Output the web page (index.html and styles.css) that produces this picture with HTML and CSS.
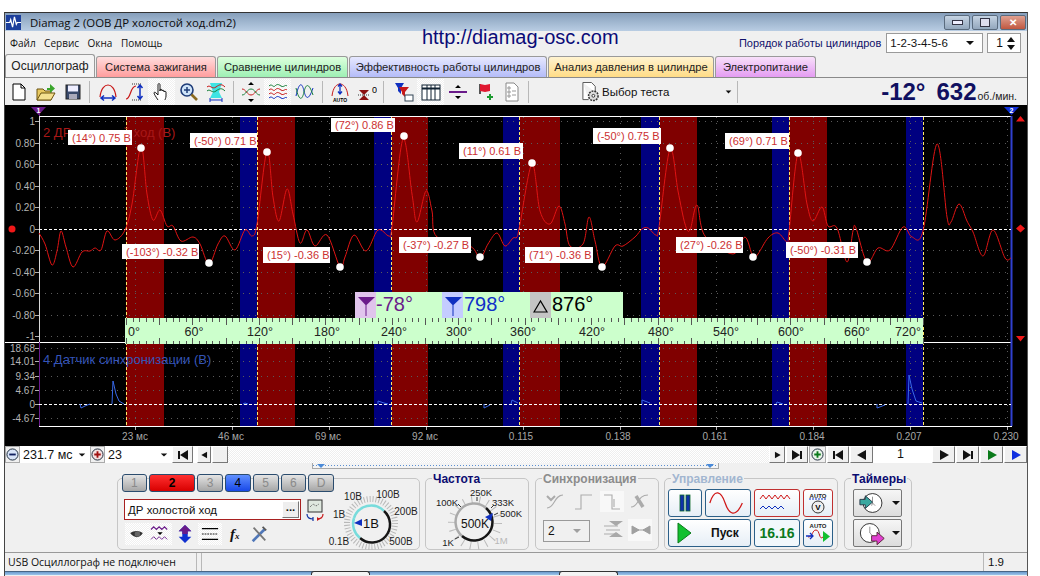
FILE: index.html
```html
<!DOCTYPE html>
<html lang="ru">
<head>
    <meta charset="UTF-8">
    <title>Diamag 2</title>
    <link rel="stylesheet" href="styles.css">
</head>
<body>
<svg class="defs" width="0" height="0">
    <symbol id="i-first" viewBox="0 0 14 12"><path d="M2 2h2v8H2zM12 1v10L4 6z"/></symbol>
    <symbol id="i-last" viewBox="0 0 14 12"><path d="M10 2h2v8h-2zM2 1v10l8-5z"/></symbol>
    <symbol id="i-next" viewBox="0 0 14 12"><path d="M3 1v10l9-5z"/></symbol>
    <symbol id="i-prev" viewBox="0 0 14 12"><path d="M11 1v10L2 6z"/></symbol>
    <symbol id="i-down" viewBox="0 0 10 6"><path d="M1 1h8L5 5z"/></symbol>
</svg>

<div class="window">
    <div class="titlebar">
        <svg class="app-icon" viewBox="0 0 16 16"><rect width="16" height="16" fill="#1c3f9c"/><path d="M0 8h4l1-3 2 8 2-11 2 8 1-2h4" fill="none" stroke="#fff" stroke-width="1.3"/></svg>
        <span class="title-text">Diamag 2 (ООВ ДР холостой ход.dm2)</span>
        <div class="win-btns">
            <span class="win-btn"><i class="win-min"></i></span>
            <span class="win-btn"><i class="win-max"></i></span>
            <span class="win-btn win-close">✕</span>
        </div>
    </div>

    <div class="menubar">
        <span class="menu-item">Файл</span>
        <span class="menu-item">Сервис</span>
        <span class="menu-item">Окна</span>
        <span class="menu-item">Помощь</span>
        <span class="site-link">http://diamag-osc.com</span>
        <span class="order-label">Порядок работы цилиндров</span>
        <span class="combo order-combo">1-2-3-4-5-6<svg class="arrow"><use href="#i-down"/></svg></span>
        <span class="combo spin-combo">1<span class="spin"><b></b><b></b></span></span>
    </div>

    <div class="tabs">
        <span class="tab tab-active">Осциллограф</span>
        <span class="tab tab-red">Система зажигания</span>
        <span class="tab tab-green">Сравнение цилиндров</span>
        <span class="tab tab-violet">Эффективность работы цилиндров</span>
        <span class="tab tab-yellow">Анализ давления в цилиндре</span>
        <span class="tab tab-pink">Электропитание</span>
    </div>

    <div class="toolbar">
        <span class="tool"><svg viewBox="0 0 20 20"><path d="M4 2h8l4 4v12H4z" fill="#fff" stroke="#000"/><path d="M12 2v4h4" fill="none" stroke="#000"/></svg></span>
        <span class="tool"><svg viewBox="0 0 20 20"><path d="M1 18V7h6l2 2h6v9z" fill="#e8c860" stroke="#6b5310"/><path d="M1 18l4-7h14l-4 7z" fill="#f5e090" stroke="#6b5310"/><path d="M11 6h3V2l5 4.500-5 4.500V8h-3z" fill="#3aa52c"/></svg></span>
        <span class="tool"><svg viewBox="0 0 20 20"><rect x="3" y="3" width="14" height="14" fill="#39496a" stroke="#222"/><rect x="5" y="3.500" width="10" height="6" fill="#eef"/><rect x="6" y="12" width="8" height="5" fill="#aab"/></svg></span>
        <i class="tool-sep sep-a"></i>
        <span class="tool"><svg viewBox="0 0 20 20"><path d="M2 15C3 6 7 3 10 3s7 3 8 12" fill="none" stroke="#c81818" stroke-width="1.2"/><path d="M3 16h14M6 13.500 3 16l3 2.500M14 13.500l3 2.500-3 2.500" fill="none" stroke="#1030c0" stroke-width="1.500"/></svg></span>
        <span class="tool"><svg viewBox="0 0 20 20"><path d="M1 17c5 0 4-13 10-13" fill="none" stroke="#c81818" stroke-width="1.2"/><path d="M7 2h10M7 18h10" stroke="#333" stroke-dasharray="1 1"/><path d="M15 3v14M12.500 6 15 3l2.500 3M12.500 14l2.500 3 2.500-3" fill="none" stroke="#1030c0" stroke-width="1.500"/></svg></span>
        <span class="tool tool-on"><svg viewBox="0 0 20 20"><path d="M6 18c-2-3-4-6-4-7s1-1 2 0l2 2V3c0-2 2-2 2 0v6-1c0-1 2-1 2 0v1c0-1 2-1 2 0v1c0-1 2-1 2 0v4c0 2-1 3-1 4" fill="#fff" stroke="#000" stroke-width=".9"/></svg></span>
        <span class="tool"><svg viewBox="0 0 20 20"><circle cx="8" cy="8" r="6" fill="#cfe4f8" stroke="#1e3c78" stroke-width="1.600"/><path d="M5 8h6M8 5v6" stroke="#1e3c78" stroke-width="1.500"/><path d="M12.500 12.500 18 18" stroke="#8a6a20" stroke-width="2.600"/></svg></span>
        <span class="tool"><svg viewBox="0 0 20 20"><path d="M4 1h12l-3 9 3 6H4l3-6z" fill="#3fe4e4"/><path d="M1 5c3-3 5 3 9 0s6-3 9 0" fill="none" stroke="#c81818"/><path d="M1 9c3-3 5 3 9 0s6-3 9 0" fill="none" stroke="#18803a"/><path d="M4 18h12M4 16v4M16 16v4" stroke="#1030c0" fill="none"/></svg></span>
        <i class="tool-sep sep-b"></i>
        <span class="tool"><svg viewBox="0 0 20 20"><path d="M1 7c4 0 5 6 9 6s5-6 9-6" fill="none" stroke="#c81818"/><path d="M1 13c4 0 5-6 9-6s5 6 9 6" fill="none" stroke="#18803a"/><path d="M7 3h6l-3-3zM7 17h6l-3 3z"/></svg></span>
        <span class="tool tool-on"><svg viewBox="0 0 20 20"><path d="M1 4c3-3 4 2 6 0s3-2 6 0 4-2 6 0" fill="none" stroke="#18803a"/><path d="M1 8c3-3 4 2 6 0s3-2 6 0 4-2 6 0M1 12c3-3 4 2 6 0s3-2 6 0 4-2 6 0" fill="none" stroke="#c81818"/><path d="M1 16c3-3 4 2 6 0s3-2 6 0 4-2 6 0" fill="none" stroke="#1030c0"/></svg></span>
        <span class="tool"><svg viewBox="0 0 20 20"><path d="M1 14C4 0 7 0 9 9s5 9 9-3" fill="none" stroke="#1030c0"/><path d="M1 6c3 13 6 13 8 4s5-9 9 3" fill="none" stroke="#18803a"/></svg></span>
        <i class="tool-sep sep-c"></i>
        <span class="tool"><svg viewBox="0 0 20 20"><path d="M2 14C3 5 7 2 10 2s7 3 8 12" fill="none" stroke="#c81818"/><path d="M10 2v10M8 4.500 10 2l2 2.500M8 9.500l2 2.500 2-2.500" fill="none" stroke="#1030c0" stroke-width="1.300"/><text x="10" y="19.500" class="tiny-auto">AUTO</text></svg></span>
        <span class="tool"><svg viewBox="0 0 20 20"><path d="M2 8h10l-5 5zM2 18h10l-5-5z" fill="#8a1010"/><path d="M1 13h12" stroke="#333" stroke-dasharray="1 1"/><text x="15" y="11" class="tiny-zero">0</text></svg></span>
        <i class="tool-sep sep-d"></i>
        <span class="tool"><svg viewBox="0 0 20 20"><path d="M1 1h9L7 6v6L4 9V6z" fill="#1030c0"/><path d="M5 5h10l-4 5v5l-3-3v-2z" fill="#c81818"/><rect x="11" y="13" width="8" height="6" fill="#fff" stroke="#345"/></svg></span>
        <span class="tool tool-on"><svg viewBox="0 0 20 20"><rect x="1" y="3" width="18" height="15" fill="#fff" stroke="#123"/><path d="M1 6.500h18" stroke="#123" stroke-width="2"/><path d="M6 3v15M10 3v15M14 3v15" stroke="#123"/></svg></span>
        <span class="tool"><svg viewBox="0 0 20 20"><path d="M1 10h18" stroke="#6a1b8a" stroke-width="2"/><path d="M7 6h6l-3-3zM7 14h6l-3 3z"/></svg></span>
        <span class="tool"><svg viewBox="0 0 20 20"><path d="M5 2v10" stroke="#222" stroke-width="1.500"/><path d="M5 2l5 1 5-1v7l-5 1-5-1z" fill="#e01830"/><path d="M12 15h6M15 12v6" stroke="#1c9a30" stroke-width="2"/></svg></span>
        <span class="tool"><svg viewBox="0 0 20 20"><path d="M4 1h8l4 4v14H4z" fill="#fff" stroke="#888"/><path d="M6 5h2v2H6zM6 9h2v2H6zM6 13h2v2H6zM10 9h4M10 13h4" stroke="#999" fill="none"/></svg></span>
        <i class="tool-sep sep-e"></i>
        <span class="test-select">
            <svg class="test-icon" viewBox="0 0 20 22"><path d="M2 1h9l4 4v6M2 1v18h6" fill="#fff" stroke="#555"/><circle cx="13" cy="15" r="5" fill="#ddd" stroke="#333" stroke-dasharray="2 1" stroke-width="1.600"/><circle cx="13" cy="15" r="1.500" fill="#fff" stroke="#333"/></svg>
            <span class="test-text">Выбор теста</span>
            <svg class="arrow test-arrow"><use href="#i-down"/></svg>
        </span>
        <i class="tool-sep"></i>
        <span class="rpm"><b class="rpm-angle">-12°</b><b class="rpm-val">632</b><span class="rpm-unit">об./мин.</span></span>
    </div>

    <svg class="scope" id="scope" width="1022" height="341" viewBox="5 106 1022 341">
        <rect x="5" y="106" width="1022" height="341" fill="#000"/>
        <g id="back"></g>

        <text x="43" y="138" class="ch-title ch-red">2 ДР холостой ход (В)</text>
        <text x="43" y="365" class="ch-title ch-blue">4 Датчик синхронизации (В)</text>

        <g id="trace"></g>

        <g class="axis-y">
            <text x="35" y="126">1</text><text x="35" y="148">0.80</text><text x="35" y="169">0.60</text>
            <text x="35" y="191">0.40</text><text x="35" y="212">0.20</text><text x="35" y="234">0</text>
            <text x="35" y="255">-0.20</text><text x="35" y="277">-0.40</text><text x="35" y="298">-0.60</text>
            <text x="35" y="320">-0.80</text><text x="35" y="341">-1</text>
            <text x="35" y="353">18.68</text><text x="35" y="366">14.01</text><text x="35" y="381">9.34</text>
            <text x="35" y="395">4.67</text><text x="35" y="409">0</text><text x="35" y="423">-4.67</text>
        </g>
        <g class="axis-t">
            <text x="135" y="441">23 мс</text><text x="231" y="441">46 мс</text><text x="328" y="441">69 мс</text>
            <text x="425" y="441">92 мс</text><text x="521" y="441">0.115</text><text x="618" y="441">0.138</text>
            <text x="715" y="441">0.161</text><text x="812" y="441">0.184</text><text x="909" y="441">0.207</text>
            <text x="1006" y="441">0.230</text>
        </g>

        <rect x="125" y="319" width="798" height="26" fill="#ccffcc"/>
        <g id="ruler"></g>
        <g class="ruler-num">
            <text x="134" y="337">0°</text><text x="194" y="337">60°</text><text x="260" y="337">120°</text>
            <text x="327" y="337">180°</text><text x="394" y="337">240°</text><text x="459" y="337">300°</text>
            <text x="523" y="337">360°</text><text x="592" y="337">420°</text><text x="661" y="337">480°</text>
            <text x="726" y="337">540°</text><text x="791" y="337">600°</text><text x="857" y="337">660°</text>
            <text x="908" y="337">720°</text>
        </g>

        <rect x="355" y="293" width="268" height="26" fill="#ccffcc"/>
        <rect x="355" y="293" width="21" height="26" fill="#e0c4ec"/>
        <rect x="442" y="293" width="21" height="26" fill="#c4ccff"/>
        <rect x="530" y="293" width="21" height="26" fill="#c4c4c4"/>
        <path d="M358 298h17l-8.500 8v11h-1v-11z" fill="#6a1b8a"/>
        <path d="M445 298h17l-8.500 8v11h-1v-11z" fill="#1030c0"/>
        <path d="M534 313l6.500-11 6.500 11z" fill="none" stroke="#000" stroke-width="1.200"/>
        <text x="376" y="312" class="readout read-a">-78°</text>
        <text x="464" y="312" class="readout read-b">798°</text>
        <text x="552" y="312" class="readout">876°</text>

        <g class="tip">
            <rect x="68" y="131" width="64" height="15"/><text x="72" y="143">(14°) 0.75 В</text>
            <rect x="190" y="134" width="67" height="15"/><text x="194" y="146">(-50°) 0.71 В</text>
            <rect x="122" y="245" width="77" height="15"/><text x="126" y="257">(-103°) -0.32 В</text>
            <rect x="263" y="248" width="67" height="16"/><text x="267" y="260">(15°) -0.36 В</text>
            <rect x="331" y="119" width="64" height="14"/><text x="335" y="130">(72°) 0.86 В</text>
            <rect x="459" y="144" width="64" height="16"/><text x="463" y="156">(11°) 0.61 В</text>
            <rect x="399" y="238" width="72" height="16"/><text x="403" y="250">(-37°) -0.27 В</text>
            <rect x="525" y="248" width="68" height="16"/><text x="529" y="260">(71°) -0.36 В</text>
            <rect x="593" y="129" width="68" height="16"/><text x="597" y="141">(-50°) 0.75 В</text>
            <rect x="676" y="238" width="67" height="16"/><text x="680" y="250">(27°) -0.26 В</text>
            <rect x="725" y="134" width="64" height="16"/><text x="729" y="146">(69°) 0.71 В</text>
            <rect x="786" y="243" width="72" height="16"/><text x="790" y="255">(-50°) -0.31 В</text>
        </g>
        <g fill="#fff">
            <circle cx="141" cy="149" r="3.800"/><circle cx="267" cy="153" r="3.800"/><circle cx="209" cy="264" r="3.800"/>
            <circle cx="340" cy="268" r="3.800"/><circle cx="404" cy="137" r="3.800"/><circle cx="532" cy="164" r="3.800"/>
            <circle cx="480" cy="258" r="3.800"/><circle cx="602" cy="268" r="3.800"/><circle cx="670" cy="149" r="3.800"/>
            <circle cx="753" cy="258" r="3.800"/><circle cx="798" cy="154" r="3.800"/><circle cx="867" cy="263" r="3.800"/>
        </g>

        <circle cx="12" cy="230" r="3.500" fill="#f01818"/>
        <path d="M31 108h15l-7.500 8z" fill="#6a1b8a"/>
        <text x="38.500" y="114" class="cursor-num">1</text>
        <path d="M1004 108h15l-7.500 8z" fill="#1030d8"/>
        <text x="1011.500" y="114" class="cursor-num">2</text>
        <path d="M1016 122.500l4.500-5.500 4.500 5.500zM1016 337l4.500 5.500 4.500-5.500zM1016 229.500l4.500-4 4.500 4-4.500 4z" fill="#f01818"/>
    </svg>

    <div class="navbar">
        <span class="round-btn"><svg viewBox="0 0 14 14"><circle cx="7" cy="7" r="6" fill="#d8e4f8" stroke="#123"/><path d="M3.500 7h7" stroke="#102060" stroke-width="2"/></svg></span>
        <span class="nav-combo nav-combo-a">231.7 мс<svg class="arrow"><use href="#i-down"/></svg></span>
        <span class="round-btn"><svg viewBox="0 0 14 14"><circle cx="7" cy="7" r="6" fill="#f4e0e0" stroke="#123"/><path d="M3.500 7h7M7 3.500v7" stroke="#a01010" stroke-width="2"/></svg></span>
        <span class="nav-combo nav-combo-b">23<svg class="arrow"><use href="#i-down"/></svg></span>
        <span class="nav-btn btn-w21"><svg><use href="#i-first"/></svg></span>
        <span class="nav-btn btn-w14"><svg class="small"><use href="#i-prev"/></svg></span>
        <span class="nav-btn btn-w16"></span>
        <span class="nav-fill"></span>
        <span class="nav-btn btn-w16"><svg class="small"><use href="#i-next"/></svg></span>
        <span class="nav-btn btn-w22 ml1"><svg><use href="#i-last"/></svg></span>
        <span class="round-btn round-green ml1"><svg viewBox="0 0 14 14"><circle cx="7" cy="7" r="6" fill="#e8f4e8" stroke="#123"/><path d="M3.500 7h7M7 3.500v7" stroke="#0a7a1a" stroke-width="2"/></svg></span>
        <span class="nav-btn btn-w22 ml1"><svg><use href="#i-first"/></svg></span>
        <span class="nav-btn btn-w23 ml1"><svg><use href="#i-prev"/></svg></span>
        <span class="nav-page">1</span>
        <span class="nav-btn btn-w23"><svg><use href="#i-next"/></svg></span>
        <span class="nav-btn btn-w23 ml1"><svg><use href="#i-last"/></svg></span>
        <span class="nav-btn btn-w23 ml1 c-green"><svg><use href="#i-next"/></svg></span>
        <span class="nav-btn btn-w23 ml1 c-blue"><svg><use href="#i-next"/></svg></span>
    </div>

    <div class="panel">
        <div class="splitter"><i class="split-l"></i><i class="split-r"></i></div>
        <div class="groups">
            <div class="group group-channels">
                <div class="ch-col">
                    <div class="ch-btns">
                        <span class="ch-btn">1</span>
                        <span class="ch-btn ch-on-red">2</span>
                        <span class="ch-btn">3</span>
                        <span class="ch-btn ch-on-blue">4</span>
                        <span class="ch-btn">5</span>
                        <span class="ch-btn">6</span>
                        <span class="ch-btn">D</span>
                    </div>
                    <div class="ch-row">
                        <div class="ch-input">ДР холостой ход<span class="dots">...</span></div>
                        <svg class="ch-swap" viewBox="0 0 20 22"><rect x="3" y="1" width="14" height="12" fill="#dfe8df" stroke="#333"/><path d="M5 8l3-3 3 2 3-2" fill="none" stroke="#555" stroke-dasharray="1 1"/><path d="M2 15c0 4 3 5 6 5M8 18v4" fill="none" stroke="#1030a0" stroke-width="1.200"/><path d="M18 15c0 4-3 5-6 5" fill="none" stroke="#c81818" stroke-width="1.200"/><path d="M15 20l-3-2v4z" fill="#c81818"/></svg>
                    </div>
                    <div class="ch-tools">
                        <span class="ch-tool tool-on w23"><svg viewBox="0 0 20 20"><path d="M3 9c4-3 10-3 14 0-3 6-10 6-14 0z" fill="#333"/><circle cx="11" cy="10" r="3" fill="#666"/></svg></span>
                        <span class="ch-tool tool-on w24"><svg viewBox="0 0 22 20"><path d="M1 5l3-3 3 3 3-3 3 3 3-3 3 3" fill="none" stroke="#6a1b8a" stroke-width="1.300"/><path d="M8 8h6l-3 3z" fill="#000"/><path d="M1 16l3-3 3 3 3-3 3 3 3-3 3 3" fill="none" stroke="#6a1b8a"/></svg></span>
                        <span class="ch-tool w18"><svg viewBox="0 0 18 20"><path d="M9 0l7 7h-4v6h4l-7 7-7-7h4V7H2z" fill="#1030d0"/><path d="M9 0l7 7h-4v3H6V7H2z" fill="#6a1b8a"/></svg></span>
                        <span class="ch-tool tool-on w24 gap5"><svg viewBox="0 0 22 20"><path d="M2 4h18M2 16h18" stroke="#000" stroke-width="1.400"/><path d="M2 10h18" stroke="#000" stroke-dasharray="2 1"/></svg></span>
                        <span class="ch-fx">f<small>x</small></span>
                        <span class="ch-tool w18 gap6"><svg viewBox="0 0 18 20"><path d="M2 18 15 5" stroke="#5077b8" stroke-width="3"/><path d="M3 3l13 14" stroke="#777" stroke-width="2"/><path d="M13 2l4 4" stroke="#555" stroke-width="2"/></svg></span>
                    </div>
                </div>
                <svg class="knob-a" width="86" height="71" viewBox="334 480 86 71">
                    <circle cx="371" cy="524" r="24" class="knob-ticks"/>
                    <path d="M354 519a18 18 0 0 1 30-7" class="knob-cyan"/>
                    <path d="M384 512a18 18 0 0 1-24 27" class="knob-dark"/>
                    <path d="M360 539a18 18 0 0 1-6-20" class="knob-cyan"/>
                    <path d="M354 524l8-4v7z" fill="#1030c0"/>
                    <text x="371" y="529" class="knob-mid">1В</text>
                    <g class="knob-lab">
                        <text x="353" y="501">10В</text><text x="388" y="499">100В</text>
                        <text x="339" y="519">1В</text><text x="406" y="516">200В</text>
                        <text x="339" y="546">0.1В</text><text x="401" y="546">500В</text>
                    </g>
                </svg>
            </div>

            <div class="group group-freq">
                <span class="group-title">Частота</span>
                <svg class="knob-b" width="102" height="71" viewBox="426 480 102 71">
                    <circle cx="475" cy="524" r="23" class="knob-ticks wide"/>
                    <path d="M462 537a18 18 0 0 1 24-28" class="knob-gray"/>
                    <path d="M486 509a18 18 0 0 1-24 28" class="knob-dark"/>
                    <path d="M485 518l8-4-2 8z" fill="#1030c0"/>
                    <text x="475" y="529" class="knob-mid big">500K</text>
                    <g class="knob-lab lab-small">
                        <text x="447" y="507">100K</text><text x="481" y="497">250K</text>
                        <text x="503" y="507">333K</text><text x="511" y="518">500K</text>
                        <text x="448" y="547">1K</text><text x="501" y="545" class="off">1M</text>
                    </g>
                    <path d="M461 508l-3-3M477 502v-4M491 509l3-3M494 516l4-2M459 538l-4 2" stroke="#333"/>
                </svg>
            </div>

            <div class="group group-sync">
                <span class="group-title t-gray">Синхронизация</span>
                <svg class="sync-art" width="122" height="71" viewBox="536 480 122 71">
                    <rect x="600" y="492" width="24" height="21" class="dither"/>
                    <rect x="628" y="520" width="24" height="22" class="dither"/>
                    <g fill="none" stroke="#ababab" stroke-width="1.100">
                        <path d="M547 509c8 0 7-13 16-13"/><path d="M547 497l4 4 4-4" stroke-width="2"/>
                        <path d="M575 510h6v-14h11M581 500v7"/>
                        <path d="M604 496h8v14h8M614 500v8"/>
                        <path d="M631 508c8 0 6-12 17-12"/><path d="M636 497l7 11" stroke-width="3.500"/>
                        <path d="M604 527h14M606 531h14M604 535h14"/>
                    </g>
                    <path d="M609 522h14l-7 5zM609 538h14l-7-5z" fill="#a8a8a8"/>
                    <path d="M632 531h18M632 527l7 4-7 4zM650 527l-7 4 7 4z" fill="#a0a0a0" stroke="#a0a0a0"/>
                </svg>
                <span class="combo sync-combo">2<svg class="arrow"><use href="#i-down"/></svg></span>
            </div>

            <div class="group group-ctrl">
                <span class="group-title t-pale">Управление</span>
                <div class="ctrl-grid">
                    <span class="cbtn"><svg viewBox="0 0 14 18" width="14" height="18"><rect x="2" y="1" width="4" height="16" fill="#1030a8" stroke="#0a6a2a" stroke-width=".8"/><rect x="8" y="1" width="4" height="16" fill="#1030a8" stroke="#0a6a2a" stroke-width=".8"/></svg></span>
                    <span class="cbtn"><svg viewBox="0 0 46 22" width="44" height="22"><path d="M4 11c5-16 12-12 16 0s11 16 18 0" fill="none" stroke="#d01818" stroke-width="1.300"/></svg></span>
                    <span class="cbtn cbtn-red"><svg viewBox="0 0 36 20" width="36" height="20"><path d="M1 6l3-4 3 4 3-4 3 4 3-4 3 4 3-4 3 4 3-4 3 4" fill="none" stroke="#d01818"/><path d="M1 16l3-3 3 3 3-3 3 3 3-3 3 3 3-3 3 3" fill="none" stroke="#1030c0"/></svg></span>
                    <span class="cbtn cbtn-red"><svg viewBox="0 0 24 24" width="24" height="24"><text x="12" y="6.500" class="auto-txt">AUTO</text><path d="M3 8h18" stroke="#1030c0" stroke-dasharray="2 1"/><circle cx="12" cy="16" r="6" fill="#eee" stroke="#333"/><text x="12" y="19" class="auto-v">V</text></svg></span>
                    <span class="cbtn"><svg viewBox="0 0 20 24" width="20" height="24"><path d="M3 2v20l13-10z" fill="#12c030" stroke="#0a7a1a"/></svg><b class="start-text">Пуск</b></span>
                    <span class="cbtn cbtn-time">16.16</span>
                    <span class="cbtn"><svg viewBox="0 0 26 24" width="26" height="24"><text x="13" y="6.500" class="auto-txt">AUTO</text><path d="M3 16c5 0 4-7 8-7s3 11 7 7" fill="none" stroke="#c81818"/><path d="M1 15h7M5 12l3 3-3 3" fill="none" stroke="#1030c0" stroke-width="1.300"/><path d="M18 10v11l7-5.500z" fill="#12c030"/></svg></span>
                </div>
            </div>

            <div class="group group-timers">
                <span class="group-title">Таймеры</span>
                <span class="timer-btn"><svg viewBox="0 0 30 26" width="30" height="26"><circle cx="15" cy="13" r="10.500" fill="#fff" stroke="#222"/><path d="M15 6v7l3 3M15 13l-1 3" stroke="#888" fill="none"/><path d="M1 9h6V5l8 7-8 7v-4H1z" fill="#3aa8a0" stroke="#234"/></svg><svg class="arrow"><use href="#i-down"/></svg></span>
                <span class="timer-btn"><svg viewBox="0 0 30 26" width="30" height="26"><circle cx="12" cy="13" r="10.500" fill="#fff" stroke="#222"/><path d="M12 6v7l3 3" stroke="#888" fill="none"/><path d="M14 16h6v-4l8 7-8 7v-4h-6z" fill="#e040d0" stroke="#523"/></svg><svg class="arrow"><use href="#i-down"/></svg></span>
            </div>
        </div>
    </div>

    <div class="statusbar">
        <span class="st-cell st-main">USB Осциллограф не подключен</span>
        <span class="st-cell st-fill"></span>
        <span class="st-cell st-ver">1.9</span>
    </div>
    <div class="taskbar"><i class="task-a"></i><i class="task-b"></i></div>
</div>
<script src="script.js"></script>
</body>
</html>
```

FILE: styles.css
```css
*{
    box-sizing: border-box;
    padding: 0;
    margin: 0;
}
body{
    background: #fff;
    font-family: "Liberation Sans", sans-serif;
    font-size: 11px;
    color: #111;
    overflow: hidden;
}
.defs{
    position: absolute;
}
.window{
    width: 1024px;
    height: 564px;
    margin: 12px 0 0 4px;
    border-left: 1px solid #444;
    border-right: 1px solid #555;
    border-top: 1px solid #333;
    background: #f0f0f0;
    display: flex;
    flex-direction: column;
    overflow: hidden;
}
.arrow{
    width: 10px;
    height: 6px;
    flex: none;
    fill: #111;
}

/* title and menu */
.titlebar{
    height: 18px;
    background: linear-gradient(#869fbb, #b9cde3);
    display: flex;
    align-items: center;
    padding-left: 1px;
}
.app-icon{
    width: 15px;
    height: 15px;
}
.title-text{
    margin-left: 9px;
    font-family: "Open Sans", sans-serif;
    font-size: 11.4px;
    color: #0c0c0c;
}
.win-btns{
    margin-left: auto;
    display: flex;
    gap: 2px;
    padding-right: 1px;
}
.win-btn{
    width: 26px;
    height: 15px;
    border: 1px solid #5a6b7e;
    border-radius: 2px;
    background: linear-gradient(#c5d3e2, #93a7bd);
    display: flex;
    align-items: center;
    justify-content: center;
    font-size: 10px;
    color: #fff;
}
.win-close{
    background: linear-gradient(#e0a090, #c05840);
    font-weight: bold;
}
.win-min{
    width: 11px;
    height: 5px;
    border: 1px solid #334;
    background: #eef;
}
.win-max{
    width: 10px;
    height: 9px;
    border: 1px solid #334;
    background: #dde;
}
.menubar{
    height: 23px;
    flex: none;
    display: flex;
    align-items: center;
    padding-left: 5px;
    background: #f0f0f0;
    font-family: "Open Sans", sans-serif;
    font-size: 10px;
}
.menu-item{
    margin-right: 8.500px;
}
.site-link{
    margin: -10px 0 0 251px;
    width: 317px;
    font-family: "Liberation Sans", sans-serif;
    font-size: 20px;
    color: #0b0b78;
}
.order-label{
    font-family: "Liberation Sans", sans-serif;
    font-size: 11px;
    color: #10106a;
    white-space: nowrap;
}
.combo{
    display: flex;
    align-items: center;
    background: #fff;
    border: 1px solid #9a9a9a;
    font-family: "Liberation Sans", sans-serif;
    font-size: 11.5px;
}
.order-combo{
    position: relative;
    width: 97px;
    height: 20px;
    margin-left: 5px;
    padding-left: 3px;
    justify-content: space-between;
    padding-right: 7px;
    margin-top: 1px;
}
.spin-combo{
    width: 34px;
    height: 20px;
    margin-left: 4px;
    padding-left: 8px;
    justify-content: space-between;
    margin-top: 1px;
    font-size: 12px;
}
.spin{
    display: flex;
    flex-direction: column;
    gap: 3px;
    padding-right: 5px;
}
.spin b{
    width: 0;
    height: 0;
    border-left: 4px solid transparent;
    border-right: 4px solid transparent;
    border-bottom: 5px solid #111;
}
.spin b + b{
    border-bottom: 0;
    border-top: 5px solid #111;
}

/* tabs */
.tabs{
    height: 23px;
    flex: none;
    display: flex;
    align-items: flex-end;
    gap: 1px;
    background: #f0f0f0;
}
.tab{
    height: 21px;
    border: 1px solid #9a9a9a;
    border-bottom: 0;
    border-radius: 3px 3px 0 0;
    display: flex;
    align-items: center;
    justify-content: center;
    font-size: 11.2px;
    color: #222;
    white-space: nowrap;
}
.tab-active{
    width: 90px;
    height: 23px;
    background: #f4f4f4;
    font-size: 12px;
}
.tab-red{
    width: 120px;
    background: linear-gradient(#fdd, #ff9d9d);
}
.tab-green{
    width: 131px;
    background: linear-gradient(#dfd, #9ef0b4);
}
.tab-violet{
    width: 198px;
    background: linear-gradient(#e6e8ff, #b4bcf8);
}
.tab-yellow{
    width: 166px;
    background: linear-gradient(#fff3d0, #ffdc86);
}
.tab-pink{
    width: 101px;
    background: linear-gradient(#f8e0fa, #e49cf2);
}

/* toolbar */
.toolbar{
    height: 28px;
    flex: none;
    display: flex;
    align-items: center;
    background: #f0f0f0;
    border-top: 1px solid #8a8a8a;
}
.tool{
    width: 27px;
    height: 26px;
    flex: none;
    display: flex;
    align-items: center;
    justify-content: center;
}
.tool svg{
    width: 20px;
    height: 20px;
}
.tool-on{
    background: #fafafa;
    background-image: repeating-conic-gradient(#f0f0f0 0 25%, #fff 0 50%);
    background-size: 2px 2px;
}
.tool-sep{
    width: 1px;
    height: 22px;
    flex: none;
    background: #b8b8b8;
}
.sep-a{
    margin: 0 4px 0 3px;
}
.sep-b{
    margin: 0 3px 0 4px;
}
.sep-c{
    margin: 0 3px 0 4px;
}
.sep-d{
    margin: 0 6px 0 3px;
}
.sep-e{
    margin-left: 3px;
}
.tiny-auto{
    font-size: 5px;
    font-weight: bold;
    text-anchor: middle;
}
.tiny-zero{
    font-size: 9px;
}
.test-select{
    width: 208px;
    display: flex;
    align-items: center;
    padding-left: 52px;
}
.test-icon{
    width: 19px;
    height: 22px;
}
.test-text{
    margin-left: 2px;
    font-size: 11.5px;
}
.test-arrow{
    margin-left: auto;
    margin-right: 5px;
    width: 7px;
}
.rpm{
    margin-left: auto;
    padding-right: 10px;
    display: flex;
    align-items: baseline;
    color: #101060;
}
.rpm b{
    font-size: 24px;
    line-height: 26px;
}
.rpm-val{
    margin-left: 11px;
}
.rpm-unit{
    margin-left: 1px;
    font-size: 10.500px;
    color: #222;
}

/* oscilloscope */
.scope{
    display: block;
    flex: none;
}
.ch-title{
    font-size: 13px;
}
.ch-red{
    fill: #a81818;
}
.ch-blue{
    fill: #3454b8;
}
.axis-y text{
    font-size: 10px;
    fill: #b4b4b4;
    text-anchor: end;
}
.axis-t text{
    font-size: 10px;
    fill: #a8a8a8;
    text-anchor: middle;
}
.ruler-num text{
    font-size: 12.500px;
    fill: #222;
    text-anchor: middle;
}
.readout{
    font-size: 20px;
    fill: #000;
}
.read-a{
    fill: #6a1b8a;
}
.read-b{
    fill: #1030c8;
}
.tip rect{
    fill: #fff;
}
.tip text{
    font-size: 11px;
    fill: #cc3030;
}
.cursor-num{
    font-size: 7px;
    font-weight: bold;
    fill: #fff;
    text-anchor: middle;
}

/* row under the scope */
.navbar{
    height: 17px;
    flex: none;
    display: flex;
    align-items: stretch;
    background: #fff;
}
.round-btn{
    width: 15px;
    flex: none;
    display: flex;
    align-items: center;
    justify-content: center;
    background: #f0f0f0;
    border: 1px solid #aaa;
}
.round-btn svg{
    width: 13px;
    height: 13px;
}
.round-green{
    width: 17px;
}
.nav-combo{
    display: flex;
    align-items: center;
    justify-content: space-between;
    flex: none;
    font-size: 12.5px;
    padding-left: 3px;
    padding-right: 4px;
}
.nav-combo .arrow{
    width: 8px;
}
.nav-combo-a{
    width: 70px;
}
.nav-combo-b{
    width: 67px;
}
.nav-btn{
    flex: none;
    display: flex;
    align-items: center;
    justify-content: center;
    background: #f0f0f0;
    border: 1px solid;
    border-color: #fff #777 #777 #fff;
    fill: #111;
}
.nav-btn svg{
    width: 14px;
    height: 12px;
}
.nav-btn svg.small{
    width: 9px;
}
.ml1{
    margin-left: 1px;
}
.btn-w14{
    width: 14px;
    margin: 0 1px 0 4px;
}
.btn-w16{
    width: 16px;
}
.btn-w21{
    width: 21px;
}
.btn-w22{
    width: 22px;
}
.btn-w23{
    width: 23px;
}
.c-green{
    fill: #0a7a1a;
}
.c-blue{
    fill: #1030e0;
}
.nav-fill{
    flex: 1;
    background-image: repeating-conic-gradient(#eee 0 25%, #fff 0 50%);
    background-size: 2px 2px;
}
.nav-page{
    width: 59px;
    flex: none;
    text-align: center;
    font-size: 12.5px;
    line-height: 17px;
    padding-right: 4px;
}

/* bottom panel */
.panel{
    height: 89px;
    flex: none;
    background: #f0f0f0;
}
.splitter{
    width: 407px;
    height: 6px;
    margin-left: 307px;
    border: 1px solid #a8a8a8;
    border-top: 0;
    background:
        repeating-linear-gradient(90deg, #5b8fd0 0 1px, transparent 0 3px) 0 2px / 100% 1px no-repeat,
        #f4f4f4;
    display: flex;
    justify-content: space-between;
    padding: 1px 4px 0;
}
.split-l, .split-r{
    width: 0;
    height: 0;
    border-left: 4px solid transparent;
    border-right: 4px solid transparent;
    border-top: 4px solid #4a8ad8;
}
.groups{
    display: flex;
    align-items: flex-start;
    margin: 9px 0 0 112px;
}
.group{
    position: relative;
    height: 72px;
    border: 1px solid #c6c6c6;
    border-radius: 5px;
    flex: none;
}
.group-title{
    position: absolute;
    top: -6px;
    left: 6px;
    padding: 0 1px;
    background: #f0f0f0;
    font-size: 12px;
    font-weight: bold;
    line-height: 13px;
    color: #0c0c70;
}
.t-gray{
    color: #8c8c8c;
}
.t-pale{
    color: #a2b6d0;
}
.group-channels{
    width: 303px;
    display: flex;
}
.ch-col{
    width: 216px;
    padding-left: 4px;
}
.ch-btns{
    display: flex;
    gap: 2px;
    margin-top: -5px;
}
.ch-btn{
    width: 25px;
    height: 18px;
    border: 1px solid #2b4c6e;
    border-radius: 3px;
    background: linear-gradient(#e4e4e4, #a6a6a6);
    display: flex;
    align-items: center;
    justify-content: center;
    font-size: 12px;
    color: #8a8a8a;
}
.ch-btn + .ch-btn{
    width: 26px;
}
.ch-on-red.ch-btn{
    width: 47px;
    background: linear-gradient(#ff3030, #d80000);
    color: #000;
    font-weight: bold;
}
.ch-on-blue{
    background: linear-gradient(#6090ff, #1848e8);
    color: #000;
}
.ch-row{
    display: flex;
    margin-top: 7px;
    margin-left: 2px;
}
.ch-input{
    width: 177px;
    height: 21px;
    border: 1px solid #a82020;
    background: #fff;
    display: flex;
    align-items: center;
    justify-content: space-between;
    padding: 0 1px 0 3px;
    font-size: 11.5px;
}
.dots{
    width: 17px;
    height: 17px;
    background: #eee;
    border: 1px solid;
    border-color: #fff #777 #777 #fff;
    text-align: center;
    font-weight: bold;
    line-height: 10px;
}
.ch-swap{
    width: 20px;
    height: 22px;
    margin-left: 4px;
}
.ch-tools{
    display: flex;
    align-items: center;
    height: 22px;
    margin: 2px 0 0 3px;
}
.ch-tool{
    height: 22px;
    flex: none;
    display: flex;
    align-items: center;
    justify-content: center;
}
.ch-tool svg{
    height: 18px;
    width: 100%;
}
.w23{
    width: 23px;
}
.w24{
    width: 24px;
}
.w18{
    width: 18px;
    margin-left: 4px;
}
.gap5{
    margin-left: 4px;
}
.gap6{
    margin-left: 6px;
}
.ch-fx{
    margin-left: 8px;
    width: 14px;
    font-family: "Liberation Serif", serif;
    font-style: italic;
    font-weight: bold;
    font-size: 15px;
}
.ch-fx small{
    font-size: 9px;
}
.knob-a, .knob-b, .sync-art{
    display: block;
    overflow: visible;
}
.knob-ticks{
    fill: none;
    stroke: #b8b8b8;
    stroke-width: 6;
    stroke-dasharray: 1 2;
}
.knob-ticks.wide{
    stroke-dasharray: 1 7;
    stroke-width: 8;
    stroke: #bbb;
}
.knob-cyan{
    fill: none;
    stroke: #78dcdc;
    stroke-width: 2.5;
}
.knob-dark{
    fill: none;
    stroke: #161616;
    stroke-width: 2.5;
}
.knob-gray{
    fill: none;
    stroke: #aaa;
    stroke-width: 2.5;
}
.knob-mid{
    font-size: 13px;
    text-anchor: middle;
    fill: #111;
}
.knob-mid.big{
    font-size: 12px;
}
.knob-lab text{
    font-size: 10px;
    text-anchor: middle;
    fill: #222;
}
.lab-small text{
    font-size: 9.500px;
}
.knob-lab text.off{
    fill: #b8b8b8;
}
.dither{
    fill: #f8f8f8;
}
.group-freq{
    width: 104px;
    margin-left: 5px;
}
.group-sync{
    width: 124px;
    margin-left: 6px;
}
.sync-combo{
    position: absolute;
    left: 7px;
    top: 41px;
    width: 47px;
    height: 22px;
    padding: 0 7px 0 4px;
    justify-content: space-between;
    background: #f0f0f0;
    font-size: 12px;
    fill: #aaa;
}
.sync-combo .arrow{
    fill: #a0a0a0;
}
.group-ctrl{
    width: 174px;
    margin-left: 5px;
}
.ctrl-grid{
    display: grid;
    grid-template-columns: 34px 46px 46px 30px;
    grid-template-rows: 28px 28px;
    column-gap: 3px;
    row-gap: 2px;
    margin: 10px 0 0 3px;
}
.cbtn{
    border: 1px solid #2b5f88;
    border-radius: 3px;
    background: linear-gradient(#fff, #e6eef6);
    display: flex;
    align-items: center;
    justify-content: center;
}
.cbtn-red{
    border-color: #c03030;
}
.cbtn:nth-child(5){
    grid-column: 1 / 3;
    justify-content: flex-start;
    padding-left: 6px;
}
.cbtn-time{
    font-size: 14px;
    font-weight: bold;
    color: #0c7a20;
    background: #f2f8fc;
}
.start-text{
    margin-left: 16px;
    font-size: 12px;
}
.auto-txt{
    font-size: 6px;
    font-weight: bold;
    text-anchor: middle;
    fill: #222;
}
.auto-v{
    font-size: 8px;
    font-weight: bold;
    text-anchor: middle;
}
.group-timers{
    width: 68px;
    margin-left: 6px;
    padding: 10px 0 0 8px;
}
.timer-btn{
    width: 49px;
    height: 28px;
    margin-bottom: 2px;
    border: 1px solid #777;
    border-radius: 2px;
    background: linear-gradient(#f6f6f6, #dcdcdc);
    display: flex;
    align-items: center;
    padding-left: 5px;
    gap: 5px;
}

/* status */
.statusbar{
    height: 19px;
    flex: none;
    display: flex;
    background: #f0f0f0;
    border-top: 1px solid #999;
}
.st-cell{
    border-right: 1px solid #b8b8b8;
    display: flex;
    align-items: center;
    font-size: 11px;
}
.st-main{
    width: 192px;
    padding-left: 3px;
    font-family: "Open Sans", sans-serif;
    font-size: 10.5px;
}
.st-fill{
    width: 783px;
    margin-left: 4px;
    border-left: 1px solid #b8b8b8;
}
.st-ver{
    padding-left: 4px;
    border-right: 0;
    font-size: 11.5px;
}
.taskbar{
    height: 4px;
    flex: none;
    background: linear-gradient(#2c3c50, #6f9fd0 30%, #9cc4ea);
    display: flex;
}
.task-a, .task-b{
    width: 59px;
    height: 4px;
    background: #f4f4f4;
    border-radius: 3px 3px 0 0;
    border: 1px solid #333;
    border-bottom: 0;
}
.task-a{
    margin-left: 306px;
}
.task-b{
    margin-left: 189px;
}
```

FILE: script.js
```js
var NS = "http://www.w3.org/2000/svg";

function add(parent, tag, attrs){
    var el = document.createElementNS(NS, tag);
    for(var k in attrs){
        el.setAttribute(k, attrs[k]);
    }
    parent.appendChild(el);
    return el;
}

function line(parent, x1, y1, x2, y2, color, dash, w){
    var attrs = {x1: x1, y1: y1, x2: x2, y2: y2, stroke: color, "stroke-width": w || 1};
    if(dash) attrs["stroke-dasharray"] = dash;
    return add(parent, "line", attrs);
}

// catmull-rom through the picked points
function smooth(pts){
    var d = "M" + pts[0][0] + " " + pts[0][1];
    for(var i = 0; i < pts.length - 1; i++){
        var a = pts[Math.max(i - 1, 0)], b = pts[i], c = pts[i + 1], e = pts[Math.min(i + 2, pts.length - 1)];
        d += "C" + (b[0] + (c[0] - a[0]) / 6).toFixed(1) + " " + (b[1] + (c[1] - a[1]) / 6).toFixed(1) + " "
           + (c[0] - (e[0] - b[0]) / 6).toFixed(1) + " " + (c[1] - (e[1] - b[1]) / 6).toFixed(1) + " " + c[0] + " " + c[1];
    }
    return d;
}

var back = document.getElementById("back");
var trace = document.getElementById("trace");
var ruler = document.getElementById("ruler");

var redBands = [[126,164],[257,295],[392,428],[520,560],[660,697],[789,827]];
var blueBands = [[240,257],[374,392],[503,520],[641,660],[772,789],[906,923]];
redBands.forEach(function(b){
    add(back, "rect", {x: b[0], y: 118, width: b[1] - b[0], height: 309, fill: "#800000"});
});
blueBands.forEach(function(b){
    add(back, "rect", {x: b[0], y: 118, width: b[1] - b[0], height: 309, fill: "#000080"});
});

// grid
[122,144,165,187,208,251,273,294,316,337,349,362,377,391,419].forEach(function(y){
    line(back, 39, y + 0.5, 1011, y + 0.5, "#5a5a5a", "1 5");
    line(back, 35, y + 0.5, 39, y + 0.5, "#b0b0b0");
});
for(var i = 0; i < 10; i++){
    var gx = Math.round(135 + 96.9 * i) + 0.5;
    line(back, gx, 118, gx, 427, "#5a5a5a", "1 5");
    line(back, gx, 427, gx, 431, "#b0b0b0");
}
[126,257,391,519,659,789,923].forEach(function(x){
    line(back, x + 0.5, 118, x + 0.5, 427, "#ffe868", "3 2");
});

line(back, 39, 117.5, 1011, 117.5, "#fff");
line(back, 5, 343.5, 1012, 343.5, "#fff");
line(back, 39, 427.5, 1012, 427.5, "#fff");
line(back, 39.5, 108, 39.5, 117, "#6a1b8a");
line(back, 39.5, 117, 39.5, 343, "#d8d8d8");
line(back, 39.5, 343, 39.5, 427, "#6a1b8a");
line(back, 1011.5, 117, 1011.5, 427, "#3040d0", null, 2);
line(back, 35, 230.5, 39, 230.5, "#b0b0b0");
line(back, 35, 405.5, 39, 405.5, "#b0b0b0");

line(trace, 39, 230.5, 1011, 230.5, "#fff", "3 2");
line(trace, 39, 405.5, 1011, 405.5, "#fff", "3 2");

var red = [[39,234],[45,245],[52,266],[57,252],[61,232],[66,248],[73,268],[82,253],[90,252],[95,249],[101,251],[107,232],[115,241],[125,231],[132,205],[141,147],[147,195],[153,221],[160,211],[167,227],[173,227],[181,242],[193,238],[200,245],[209,265],[218,245],[225,237],[235,251],[245,231],[252,237],[257,225],[267,152],[273,198],[279,222],[287,190],[293,215],[300,244],[307,231],[315,247],[327,236],[340,268],[345,258],[354,236],[366,252],[378,231],[389,237],[392,228],[403,140],[412,195],[417,223],[426,192],[432,212],[437,238],[470,247],[480,259],[488,245],[497,234],[505,247],[513,239],[517,238],[520,225],[532,165],[540,212],[550,225],[559,207],[565,225],[570,247],[583,245],[589,218],[595,242],[602,268],[615,247],[623,247],[635,238],[642,230],[648,229],[656,236],[659,228],[670,150],[678,192],[685,225],[690,231],[697,206],[705,237],[733,255],[745,238],[753,258],[758,255],[768,239],[778,234],[787,243],[789,233],[798,155],[807,205],[813,222],[822,208],[828,227],[837,229],[847,263],[853,232],[856,229],[867,263],[878,249],[890,251],[903,228],[912,238],[923,232],[937,145],[947,218],[951,223],[959,205],[967,222],[973,233],[983,257],[993,231],[1005,259],[1011,259]];
add(trace, "path", {d: smooth(red), fill: "none", stroke: "#e01414", "stroke-width": 1});

var blue = "M80 405L81 409L85 407L90 405 M112 405L113 382L116 395L119 402L124 405 M243 405L245 404L248 405 M378 405L378 402L384 404L388 405 M484 405L484 409L490 406 M511 405L512 401L518 404 M642 405L642 401L650 404 M776 405L777 403L783 405 M877 405L877 409L885 406 M908 405L909 376L912 390L916 402L922 404";
add(trace, "path", {d: blue, fill: "none", stroke: "#3868e8", "stroke-width": 1});

// degree ruler
for(var n = 0; n <= 120; n++){
    var rx = Math.round(126 + 6.644 * n) + 0.5;
    var major = n % 5 == 0;
    line(ruler, rx, 319, rx, major ? 326 : 323, "#555");
    line(ruler, rx, major ? 339 : 342, rx, 345, "#555");
}
```
